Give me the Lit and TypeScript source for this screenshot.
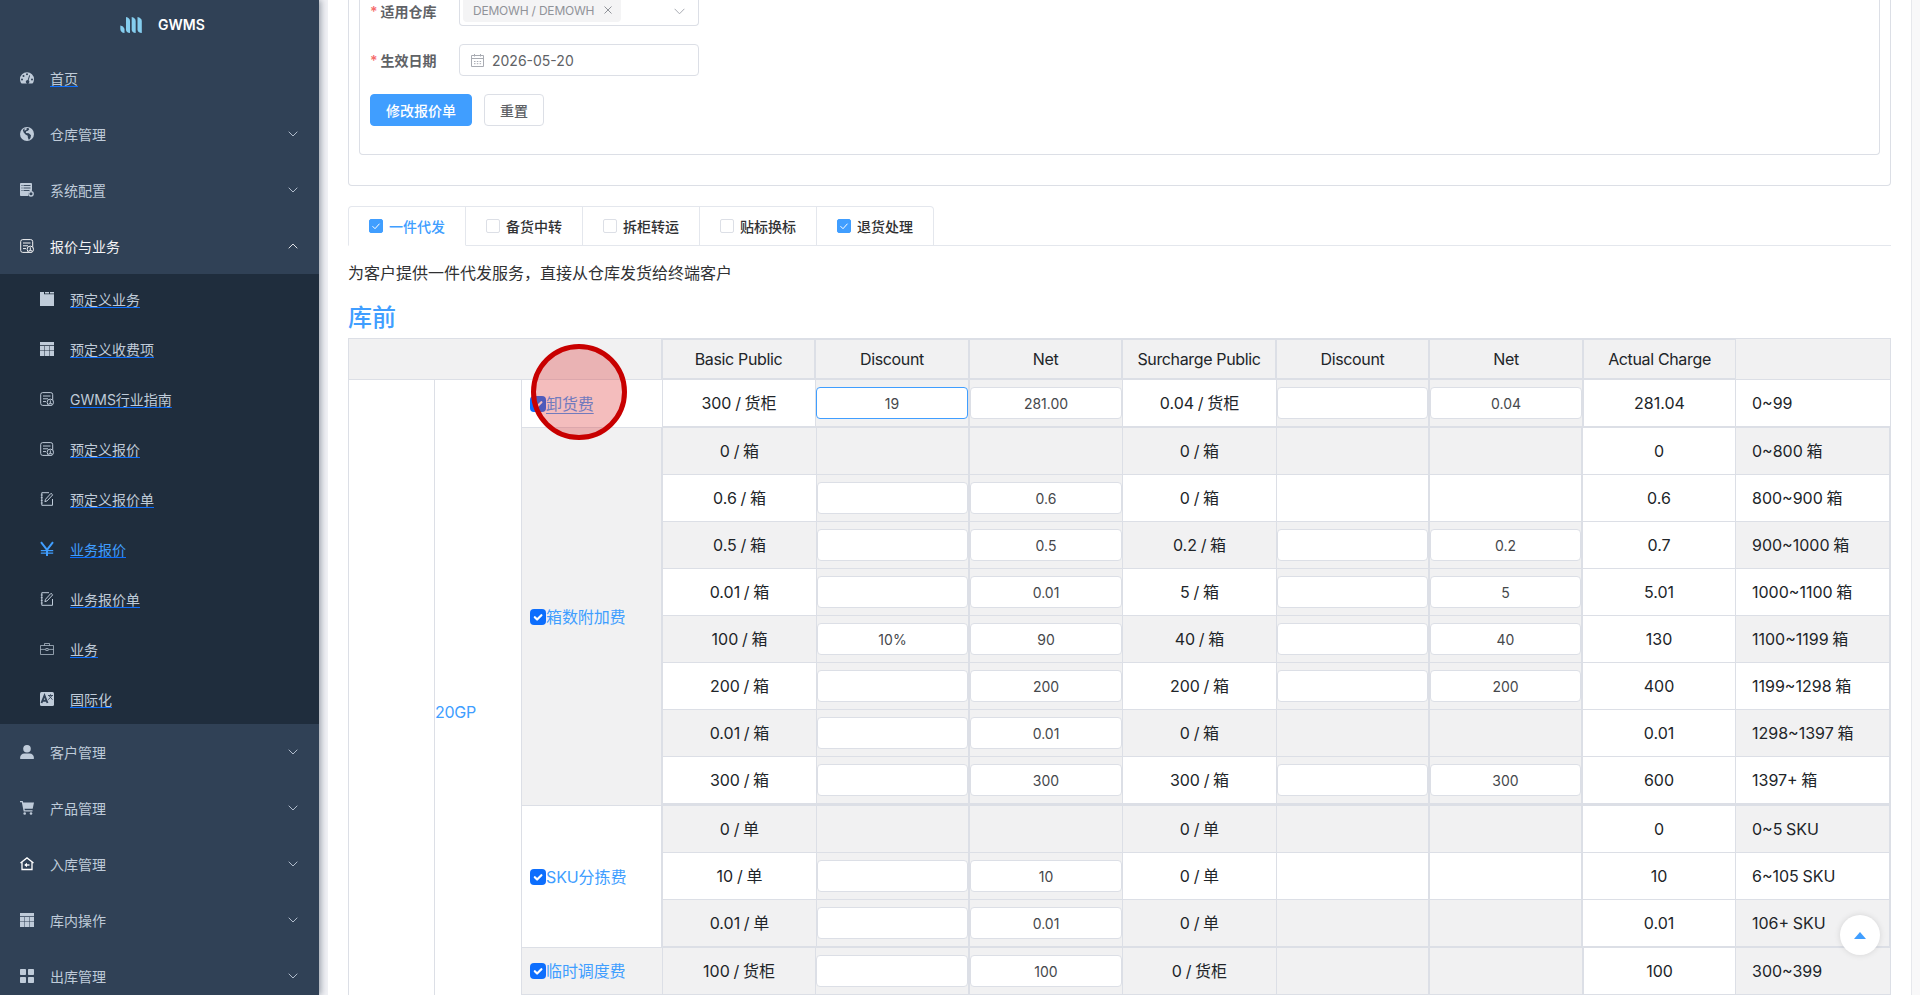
import { css, html, LitElement, nothing, svg, type TemplateResult } from "lit";
import { customElement, property } from "lit/decorators.js";
import { classMap } from "lit/directives/class-map.js";

interface MenuItem {
  label: string;
  icon: string;
  link?: boolean;
  active?: boolean;
  children?: MenuItem[];
}

interface Tier {
  basic: string;
  discount?: string;
  net?: string;
  surcharge: string;
  surDiscount?: string;
  surNet?: string;
  actual: string;
  range: string;
}

interface Fee {
  name: string;
  hovered?: boolean;
  focused?: boolean;
  grey?: boolean;
  tiers: Tier[];
}

const note = svg`
  <rect x=".7" y=".6" width="12" height="12.8" rx="2" fill="none" stroke="currentColor" />
  <path d="M3 4h7.5M3 6.8h5M3 9.6h3" stroke="currentColor" />
`;

const icons: Record<string, TemplateResult> = {
  dashboard: svg`
    <path fill="currentColor" fill-rule="evenodd" d="M7 1.2a7 7 0 0 0-7 7c0 1.400.4 2.700 1 3.900.2.300.5.500.8.500h10.400c.3 0 .6-.200.8-.500.6-1.200 1-2.500 1-3.900a7 7 0 0 0-7-7ZM7 2.300a1 1 0 1 1 0 2 1 1 0 0 1 0-2ZM2 7.500a1 1 0 1 1 0 2 1 1 0 0 1 0-2ZM3.500 4a1 1 0 1 1 0 2 1 1 0 0 1 0-2ZM12 7.500a1 1 0 1 1 0 2 1 1 0 0 1 0-2ZM9.200 4.200l.9.300-1.500 4.800a1.800 1.800 0 1 1-.9-.3Z" />
  `,
  globe: svg`
    <circle cx="7" cy="7" r="7" fill="currentColor" />
    <path class="hole" d="M4.500 1.200 8.300 1l1 1.300-1.400 1.500-1.700.4L5.800 6l3 .2 2.200 2L10.500 11l-1.600 2-1-2.200-.2-2L5.500 7.500l-1.800-2-.9-2.400Z" />
    <path fill="currentColor" d="m4.500 1 2.300.3-.3 1.500-2 1Z" />
  `,
  config: svg`
    <path fill="currentColor" d="M1 0h10c.5 0 1 .5 1 1v6.800l-2 .4-2 2.300.2 2.500H1c-.5 0-1-.4-1-1V1c0-.5.5-1 1-1Z" />
    <path class="cut" d="M1.500 2.500h1m1 0h7m-9 2.500h1m1 0h7m-9 2.500h1m1 0h6" />
    <circle cx="11" cy="10.800" r="2.200" fill="none" stroke="currentColor" stroke-width="1.300" />
  `,
  bill: svg`${note}
    <circle class="back" cx="10.300" cy="10.300" r="3.200" stroke="currentColor" />
    <path d="M8.700 11.700h3.200M10.300 8.300v2.800" stroke="currentColor" />
  `,
  tab: svg`
    <path fill="currentColor" d="M0 0h4v2.200h10V14H0Z" />
    <path fill="currentColor" d="M5 0h4v1.400H5ZM10 0h4v1.400h-4Z" />
  `,
  table: svg`
    <path fill="currentColor" d="M0 0h14v3.200H0ZM0 4h4.500v4.600H0Zm5 0h4.100v4.600H5Zm4.600 0H14v4.600H9.600ZM0 9.100h4.500V14H0Zm5 0h4.100V14H5Zm4.600 0H14V14H9.600Z" />
  `,
  edit: svg`
    <path d="M9 .7H1.800v12.600h10.700V7" fill="none" stroke="currentColor" />
    <path d="M.8 3h1.800M.8 5.700h1.800M.8 8.400h1.800M.8 11h1.800" stroke="currentColor" />
    <path d="m4.900 9.700.6-2.400 5.500-6 1.700 1.600-5.600 6Z" fill="none" stroke="currentColor" />
  `,
  yen: svg`
    <path d="m1 .2 6 7.600 6-7.600M7 7v7" fill="none" stroke="currentColor" stroke-width="2" />
    <path d="M.8 8.700h12.400M.8 11.200h12.400" stroke="currentColor" stroke-width="1.300" />
  `,
  briefcase: svg`
    <path d="M.5 3.500h13v9H.5ZM4.500 3.500v-2h5v2M.5 7.400h5m3 0h5M5.800 6.500h2.400v2H5.800Z" fill="none" stroke="currentColor" stroke-width=".7" />
  `,
  lang: svg`
    <rect width="14" height="14" rx="1.500" fill="currentColor" />
    <path class="cut bold" d="m1.500 11 3-7.500L7.500 11M2.700 8.700h3.600" />
    <path class="cut" d="M8 3.500h5M10.500 2.300v1.200M9 3.700l3.500 4M12 3.700l-3.700 4" />
  `,
  user: svg`
    <circle cx="7" cy="3.700" r="3.800" fill="currentColor" />
    <path d="M0 13.200C.2 10.200 2 8.600 4.300 8.600h5.400c2.300 0 4.100 1.600 4.300 4.600 0 .5-.3.800-.8.800H.8c-.5 0-.8-.3-.8-.8Z" fill="currentColor" />
  `,
  cart: svg`
    <path d="M0 0h2.700l.5 1.500H14l-1.300 6.300H4.500l.3 1.400h7.700v1.300H3.700L1.800 1.300H0Z" fill="currentColor" />
    <circle cx="4.700" cy="12.500" r="1.300" fill="currentColor" />
    <circle cx="11" cy="12.500" r="1.300" fill="currentColor" />
  `,
  inbound: svg`
    <path d="M.5 6 7 .9 13.500 6M2 5.300v7.200h10V5.300" fill="none" stroke="#fff" stroke-width="1.300" />
    <path d="M9.500 8H5.500" stroke="#fff" stroke-width="1.400" />
    <path d="M4.200 8 7 5.800v4.400Z" fill="#fff" />
  `,
  grid: svg`
    <path fill="currentColor" d="M1 0h4c.6 0 1 .4 1 1v4c0 .6-.4 1-1 1H1c-.6 0-1-.4-1-1V1c0-.6.4-1 1-1Zm8 0h4c.6 0 1 .4 1 1v4c0 .6-.4 1-1 1H9c-.6 0-1-.4-1-1V1c0-.6.4-1 1-1ZM1 8h4c.6 0 1 .4 1 1v4c0 .6-.4 1-1 1H1c-.6 0-1-.4-1-1V9c0-.6.4-1 1-1Zm8 0h4c.6 0 1 .4 1 1v4c0 .6-.4 1-1 1H9c-.6 0-1-.4-1-1V9c0-.6.4-1 1-1Z" />
  `,
};

const menu: MenuItem[] = [
  { label: "首页", icon: "dashboard", link: true },
  { label: "仓库管理", icon: "globe" },
  { label: "系统配置", icon: "config" },
  {
    label: "报价与业务",
    icon: "bill",
    children: [
      { label: "预定义业务", icon: "tab" },
      { label: "预定义收费项", icon: "table" },
      { label: "GWMS行业指南", icon: "bill" },
      { label: "预定义报价", icon: "bill" },
      { label: "预定义报价单", icon: "edit" },
      { label: "业务报价", icon: "yen", active: true },
      { label: "业务报价单", icon: "edit" },
      { label: "业务", icon: "briefcase" },
      { label: "国际化", icon: "lang" },
    ],
  },
  { label: "客户管理", icon: "user" },
  { label: "产品管理", icon: "cart" },
  { label: "入库管理", icon: "inbound" },
  { label: "库内操作", icon: "table" },
  { label: "出库管理", icon: "grid" },
];

const services = [
  { label: "一件代发", checked: true, active: true },
  { label: "备货中转", checked: false },
  { label: "拆柜转运", checked: false },
  { label: "贴标换标", checked: false },
  { label: "退货处理", checked: true },
];

const headers = [
  "Basic Public",
  "Discount",
  "Net",
  "Surcharge Public",
  "Discount",
  "Net",
  "Actual Charge",
];

// An undefined discount or net means the tier has no editable field there.
const fees: Fee[] = [
  {
    name: "卸货费",
    hovered: true,
    focused: true,
    tiers: [
      { basic: "300 / 货柜", discount: "19", net: "281.00", surcharge: "0.04 / 货柜", surDiscount: "", surNet: "0.04", actual: "281.04", range: "0~99" },
    ],
  },
  {
    name: "箱数附加费",
    grey: true,
    tiers: [
      { basic: "0 / 箱", surcharge: "0 / 箱", actual: "0", range: "0~800 箱" },
      { basic: "0.6 / 箱", discount: "", net: "0.6", surcharge: "0 / 箱", actual: "0.6", range: "800~900 箱" },
      { basic: "0.5 / 箱", discount: "", net: "0.5", surcharge: "0.2 / 箱", surDiscount: "", surNet: "0.2", actual: "0.7", range: "900~1000 箱" },
      { basic: "0.01 / 箱", discount: "", net: "0.01", surcharge: "5 / 箱", surDiscount: "", surNet: "5", actual: "5.01", range: "1000~1100 箱" },
      { basic: "100 / 箱", discount: "10%", net: "90", surcharge: "40 / 箱", surDiscount: "", surNet: "40", actual: "130", range: "1100~1199 箱" },
      { basic: "200 / 箱", discount: "", net: "200", surcharge: "200 / 箱", surDiscount: "", surNet: "200", actual: "400", range: "1199~1298 箱" },
      { basic: "0.01 / 箱", discount: "", net: "0.01", surcharge: "0 / 箱", actual: "0.01", range: "1298~1397 箱" },
      { basic: "300 / 箱", discount: "", net: "300", surcharge: "300 / 箱", surDiscount: "", surNet: "300", actual: "600", range: "1397+ 箱" },
    ],
  },
  {
    name: "SKU分拣费",
    tiers: [
      { basic: "0 / 单", surcharge: "0 / 单", actual: "0", range: "0~5 SKU" },
      { basic: "10 / 单", discount: "", net: "10", surcharge: "0 / 单", actual: "10", range: "6~105 SKU" },
      { basic: "0.01 / 单", discount: "", net: "0.01", surcharge: "0 / 单", actual: "0.01", range: "106+ SKU" },
    ],
  },
  {
    name: "临时调度费",
    grey: true,
    tiers: [
      { basic: "100 / 货柜", discount: "", net: "100", surcharge: "0 / 货柜", actual: "100", range: "300~399" },
    ],
  },
];

@customElement("side-menu")
export class SideMenu extends LitElement {
  static override styles = css`
    :host {
      display: block;
      flex: none;
      width: 319px;
      height: 100%;
      overflow: hidden;
      background: #304156;
      color: #bfcbd9;
      font-size: 14px;
    }

    .brand {
      display: flex;
      align-items: center;
      height: 50px;
      box-sizing: border-box;
      padding: 0 0 1px 120px;
      gap: 16px;
      color: #fff;
      font-size: 14px;
      font-weight: 600;
    }

    .brand svg {
      width: 22px;
      height: 16px;
    }

    .item {
      display: flex;
      align-items: center;
      height: 56px;
      padding: 0 21px 0 20px;
      gap: 16px;
    }

    .item.open {
      color: #f4f4f5;
    }

    .children {
      background: #1f2d3d;
    }

    .children .item {
      height: 50px;
      padding-left: 40px;
    }

    .icon {
      flex: none;
      width: 14px;
      height: 14px;
      overflow: visible;
    }

    .hole {
      fill: #304156;
    }

    .back {
      fill: #1f2d3d;
    }

    .open .back {
      fill: #304156;
    }

    .cut {
      fill: none;
      stroke: #304156;
      stroke-width: 0.9;
    }

    .cut.bold {
      stroke-width: 1.9;
    }

    .label {
      flex: 1;
      line-height: 20px;
      padding-top: 1px;
    }

    a {
      color: #0d6efd;
      text-decoration: underline;
      text-underline-offset: 2px;
      text-decoration-thickness: 1px;
    }

    a span {
      color: #bfcbd9;
    }

    .active,
    .active a span {
      color: #409eff;
    }

    .arrow {
      width: 10px;
      height: 6px;
      fill: none;
      stroke: currentColor;
      stroke-width: 0.9;
    }
  `;

  private renderItem(item: MenuItem, child = false): TemplateResult {
    const classes = {
      item: true,
      open: !!item.children,
      active: !!item.active,
    };

    return html`
      <div class="${classMap(classes)}">
        <svg class="icon" viewBox="0 0 14 14">${icons[item.icon]}</svg>
        <div class="label">
          ${child || item.link
            ? html`<a><span>${item.label}</span></a>`
            : item.label}
        </div>
        ${child || item.link ? nothing : svg`
          <svg class="arrow" viewBox="0 0 10 6">
            <path d="${item.children ? "M.7 5.300 5 1l4.300 4.300" : "M.7.700 5 5 9.300.7"}"></path>
          </svg>
        `}
      </div>
      ${item.children
        ? html`
          <div class="children">
            ${item.children.map((c) => this.renderItem(c, true))}
          </div>
        `
        : nothing}
    `;
  }

  override render() {
    return html`
      <div class="brand">
        <svg viewBox="0 0 22 16" fill="#85cdee">
          <path d="M.3 8.500c2.300.3 3.500 1.500 4.200 3.500v4C2 16 .3 14 .3 12Z"></path>
          <path d="M6 0c2.500.5 4 2 4 4v12c-2.500 0-4-1.500-4-3.500Z"></path>
          <path d="M11.700 0c2.500.5 4 2 4 4v12c-2.500 0-4-1.500-4-3.500Z"></path>
          <path d="M17.500 0c2.500.5 4.300 2 4.300 4v12c-2.500 0-4.300-1.500-4.300-3.500Z"></path>
        </svg>
        GWMS
      </div>
      ${menu.map((item) => this.renderItem(item))}
    `;
  }
}

@customElement("price-table")
export class PriceTable extends LitElement {
  @property({ attribute: false })
  fees: Fee[] = [];

  static override styles = css`
    :host {
      display: block;
      border: 1px solid #dcdfe6;
      border-width: 1px 0 0 1px;
      color: #212529;
      font-size: 16px;
      line-height: 24px;
    }

    .row {
      display: grid;
      grid-template-columns: 153px 154px 153px 154px 153px 154px 152px 155px;
    }

    .cell,
    .corner,
    .blank,
    .size,
    .name {
      box-sizing: border-box;
      border: 0 solid #dcdfe6;
      border-right-width: 1px;
    }

    .cell {
      display: flex;
      align-items: center;
      justify-content: center;
      height: 47px;
      border-bottom-width: 1px;
      background: #fff;
      white-space: nowrap;
      word-spacing: -0.8px;
    }

    .cell.wide {
      border-right-width: 2px;
    }

    .head {
      display: grid;
      grid-template-columns: 314px 1fr;
    }

    .head .cell,
    .corner {
      height: 41px;
      background: #f1f1f2;
    }

    .head .cell {
      letter-spacing: -0.35px;
      word-spacing: 0;
    }

    .head .cell:not(:last-child) {
      border-top-width: 1px;
      border-right-width: 2px;
      border-bottom-width: 2px;
    }

    .head .cell:nth-child(7) {
      border-right-width: 1px;
    }

    .corner {
      border-right-width: 2px;
      border-bottom-width: 1px;
    }

    .body {
      display: grid;
      grid-template-columns: 86px 87px 1fr;
    }

    .size {
      display: flex;
      align-items: center;
      height: 663px;
      color: #409eff;
      letter-spacing: -0.3px;
    }

    .fee {
      display: grid;
      grid-template-columns: 141px 1fr;
    }

    .name {
      display: flex;
      align-items: center;
      padding-left: 8px;
      border-right-width: 2px;
      border-bottom-width: 1px;
      color: #409eff;
    }

    .grey {
      background: #f1f1f2;
    }

    .fee:not(.single) .row {
      grid-template-columns: 154px 153px 153px 154px 153px 153px 153px 155px;
    }

    .fee:not(.single) .range {
      border-right-width: 2px;
    }

    .fee:not(.single) .tier:last-child .cell {
      height: 48px;
      border-bottom-width: 2px;
    }

    .fee.long .tier:last-child .cell {
      height: 49px;
      border-bottom-width: 3px;
    }

    .fee.single .name {
      border-right-width: 1px;
    }

    .fee.first .cell {
      height: 48px;
      border-bottom-width: 2px;
    }

    .tier:nth-child(odd) .cell {
      background: #f1f1f2;
    }

    .first .tier .cell {
      background: #fff;
    }

    .tier .cell.actual {
      background: #fff;
    }

    .tier .cell.field {
      background: #f1f1f2;
      justify-content: stretch;
    }

    .range {
      justify-content: flex-start;
      padding-left: 16px;
    }

    .input {
      flex: 1;
      box-sizing: border-box;
      height: 32px;
      padding-top: 1px;
      border: 1px solid #dcdfe6;
      border-radius: 4px;
      background: #fff;
      color: #46484c;
      font-size: 14px;
      line-height: 30px;
      text-align: center;
    }

    .input.focused {
      border-color: #409eff;
    }

    .check {
      width: 16px;
      height: 16px;
      border-radius: 4px;
      background: #0d6efd;
      fill: none;
      stroke: #fff;
      stroke-width: 2.2;
      stroke-linecap: round;
      stroke-linejoin: round;
    }

    .text {
      letter-spacing: -0.1px;
    }

    .hovered .text {
      text-decoration: underline;
      text-underline-offset: 3px;
      text-decoration-thickness: 1px;
    }
  `;

  private renderField(value: string | undefined, wide: boolean, focused = false) {
    if (value === undefined) {
      return html`<div class="${classMap({ cell: true, wide })}"></div>`;
    }
    return html`
      <div class="${classMap({ cell: true, field: true, wide })}">
        <div class="${classMap({ input: true, focused })}">${value}</div>
      </div>
    `;
  }

  private renderFee(fee: Fee, index: number) {
    const classes = {
      fee: true,
      first: index === 0,
      single: fee.tiers.length === 1,
      long: fee.tiers.length > 4,
    };

    return html`
      <div class="${classMap(classes)}">
        <div class="${classMap({ name: true, grey: !!fee.grey, hovered: !!fee.hovered })}">
          <svg class="check" viewBox="0 0 16 16"><path d="m4.800 8.200 2.300 2.300 4.300-4.300"></path></svg>
          <span class="text">${fee.name}</span>
        </div>
        <div>
          ${fee.tiers.map((t) => html`
            <div class="row tier">
              <div class="cell">${t.basic}</div>
              ${this.renderField(t.discount, true, fee.focused)}
              ${this.renderField(t.net, false)}
              <div class="cell">${t.surcharge}</div>
              ${this.renderField(t.surDiscount, true)}
              ${this.renderField(t.surNet, true)}
              <div class="cell actual">${t.actual}</div>
              <div class="cell range">${t.range}</div>
            </div>
          `)}
        </div>
      </div>
    `;
  }

  override render() {
    return html`
      <div class="head">
        <div class="corner"></div>
        <div class="row">
          ${headers.map((h) => html`<div class="cell">${h}</div>`)}
          <div class="cell"></div>
        </div>
      </div>
      <div class="body">
        <div class="blank"></div>
        <div class="size">20GP</div>
        <div>${this.fees.map((fee, i) => this.renderFee(fee, i))}</div>
      </div>
    `;
  }
}

@customElement("app-root")
export class AppRoot extends LitElement {
  static override styles = css`
    :host {
      position: relative;
      display: flex;
      width: 100%;
      height: 995px;
      overflow: hidden;
      background: #f0f1f5;
      font-family: Inter, "Noto Sans CJK SC", sans-serif;
      color: #303133;
    }

    side-menu {
      z-index: 1;
      box-shadow: 2px 0 6px rgba(0, 21, 41, 0.35);
    }

    main {
      flex: 1;
      display: flex;
      padding-left: 9px;
      min-width: 0;
    }

    .card {
      flex: 1;
      min-width: 0;
      height: 995px;
      overflow: hidden;
      box-sizing: border-box;
      padding: 0 20px;
      border-right: 1px solid #e6e8ec;
      background: #fff;
    }

    .gutter {
      flex: none;
      width: 8px;
      background: #f8f8f9;
    }

    .outer {
      height: 186px;
      box-sizing: border-box;
      padding: 0 10px;
      border: 1px solid #dcdfe6;
      border-top: 0;
      border-radius: 0 0 4px 4px;
    }

    .inner {
      height: 155px;
      box-sizing: border-box;
      padding: 0 10px;
      border: 1px solid #dcdfe6;
      border-top: 0;
      border-radius: 0 0 4px 4px;
    }

    .field {
      display: flex;
      align-items: center;
      margin-bottom: 18px;
      font-size: 14px;
    }

    .field label {
      width: 89px;
      color: #606266;
      font-weight: 600;
    }

    .field label::before {
      content: "*";
      color: #f56c6c;
      margin-right: 3px;
    }

    .control {
      display: flex;
      align-items: center;
      box-sizing: border-box;
      width: 240px;
      height: 32px;
      border: 1px solid #dcdfe6;
      border-radius: 4px;
      color: #606266;
    }

    .select {
      justify-content: space-between;
      height: 26px;
      padding: 0 13px 3px 3px;
      border-top: 0;
      border-radius: 0 0 4px 4px;
    }

    .field.clipped label {
      padding: 0 0 5px;
    }

    .field.clipped {
      height: 26px;
    }

    .tag {
      display: flex;
      align-items: center;
      box-sizing: border-box;
      width: 158px;
      height: 22px;
      padding: 0 9px 2px 10px;
      justify-content: space-between;
      border-radius: 0 0 4px 4px;
      background: #f4f4f5;
      color: #909399;
      font-size: 12px;
      letter-spacing: -0.2px;
      white-space: nowrap;
    }

    .tag svg {
      flex: none;
      width: 8px;
      height: 8px;
      stroke: #909399;
    }

    .caret {
      width: 11px;
      height: 7px;
      fill: none;
      stroke: #a8abb2;
    }

    .date {
      padding-left: 11px;
      gap: 8px;
    }

    .date svg {
      width: 13px;
      height: 13px;
      fill: none;
      stroke: #a8abb2;
    }

    .actions {
      display: flex;
      gap: 12px;
    }

    .button {
      box-sizing: border-box;
      height: 32px;
      padding: 1px 15px 0;
      border: 1px solid #dcdfe6;
      border-radius: 4px;
      color: #606266;
      font-size: 14px;
      font-weight: 500;
      line-height: 29px;
    }

    .button.primary {
      border-color: #409eff;
      background: #409eff;
      color: #fff;
    }

    .tabs {
      display: flex;
      height: 40px;
      margin-top: 20px;
      box-sizing: border-box;
      border-bottom: 1px solid #e4e7ed;
    }

    .tab {
      display: flex;
      align-items: center;
      gap: 6px;
      box-sizing: border-box;
      width: 117px;
      height: 40px;
      padding-left: 20px;
      border: 1px solid #e4e7ed;
      border-left: 0;
      font-size: 14px;
      font-weight: 500;
    }

    .tab:first-child {
      width: 118px;
      border-left: 1px solid #e4e7ed;
      border-top-left-radius: 4px;
    }

    .tab:last-child {
      border-top-right-radius: 4px;
    }

    .tab.active {
      border-bottom-color: #fff;
      color: #409eff;
    }

    .box {
      box-sizing: border-box;
      width: 14px;
      height: 14px;
      border: 1px solid #dcdfe6;
      border-radius: 2px;
    }

    .box.checked {
      border-color: #409eff;
      background: #409eff;
    }

    .box svg {
      display: block;
      fill: none;
      stroke: #fff;
    }

    .intro {
      margin: 15px 0 0;
      color: #303133;
      font-size: 16px;
      line-height: 24px;
    }

    h2 {
      margin: 19px 0 6px;
      color: #409eff;
      font-size: 24px;
      font-weight: 500;
      line-height: 28px;
    }

    .pointer {
      position: absolute;
      left: 531px;
      top: 344px;
      box-sizing: border-box;
      width: 96px;
      height: 96px;
      border: 5px solid #c80000;
      border-radius: 50%;
      background: rgba(220, 50, 50, 0.32);
    }

    .backtop {
      position: absolute;
      right: 40px;
      bottom: 40px;
      display: flex;
      align-items: center;
      justify-content: center;
      width: 40px;
      height: 40px;
      border-radius: 50%;
      background: #fff;
      box-shadow: 0 0 6px rgba(0, 0, 0, 0.12);
    }

    .backtop svg {
      width: 12px;
      height: 7px;
      fill: #409eff;
    }
  `;

  private renderForm() {
    return html`
      <div class="outer">
        <div class="inner">
          <div class="field clipped">
            <label>适用仓库</label>
            <div class="control select">
              <div class="tag">
                DEMOWH / DEMOWH
                <svg viewBox="0 0 8 8"><path d="m.5.5 7 7m0-7-7 7"></path></svg>
              </div>
              <svg class="caret" viewBox="0 0 11 7"><path d="m.6.8 4.900 5 4.900-5"></path></svg>
            </div>
          </div>
          <div class="field">
            <label>生效日期</label>
            <div class="control date">
              <svg viewBox="0 0 13 13">
                <path d="M.5 1.500h12v11H.5ZM.5 4.500h12M3.500 0v2.500M9.500 0v2.500M3 7.500h1.500m1.300 0h1.500m1.300 0h1.500M3 9.700h1.500m1.300 0h1.500m1.300 0h1.500"></path>
              </svg>
              2026-05-20
            </div>
          </div>
          <div class="actions">
            <div class="button primary">修改报价单</div>
            <div class="button">重置</div>
          </div>
        </div>
      </div>
    `;
  }

  private renderTabs() {
    return html`
      <div class="tabs">
        ${services.map((s) => html`
          <div class="${classMap({ tab: true, active: !!s.active })}">
            <span class="${classMap({ box: true, checked: s.checked })}">
              ${s.checked
                ? svg`<svg viewBox="0 0 12 12"><path d="m2.500 6.200 2.500 2.500 4.500-5"></path></svg>`
                : nothing}
            </span>
            ${s.label}
          </div>
        `)}
      </div>
    `;
  }

  override render() {
    return html`
      <side-menu></side-menu>
      <main>
        <div class="card">
          ${this.renderForm()} ${this.renderTabs()}
          <p class="intro">为客户提供一件代发服务，直接从仓库发货给终端客户</p>
          <h2>库前</h2>
          <price-table .fees="${fees}"></price-table>
        </div>
        <div class="gutter"></div>
      </main>
      <div class="pointer"></div>
      <div class="backtop">
        <svg viewBox="0 0 12 7"><path d="M6 0l6 7H0z"></path></svg>
      </div>
    `;
  }
}

declare global {
  interface HTMLElementTagNameMap {
    "app-root": AppRoot;
    "price-table": PriceTable;
    "side-menu": SideMenu;
  }
}
